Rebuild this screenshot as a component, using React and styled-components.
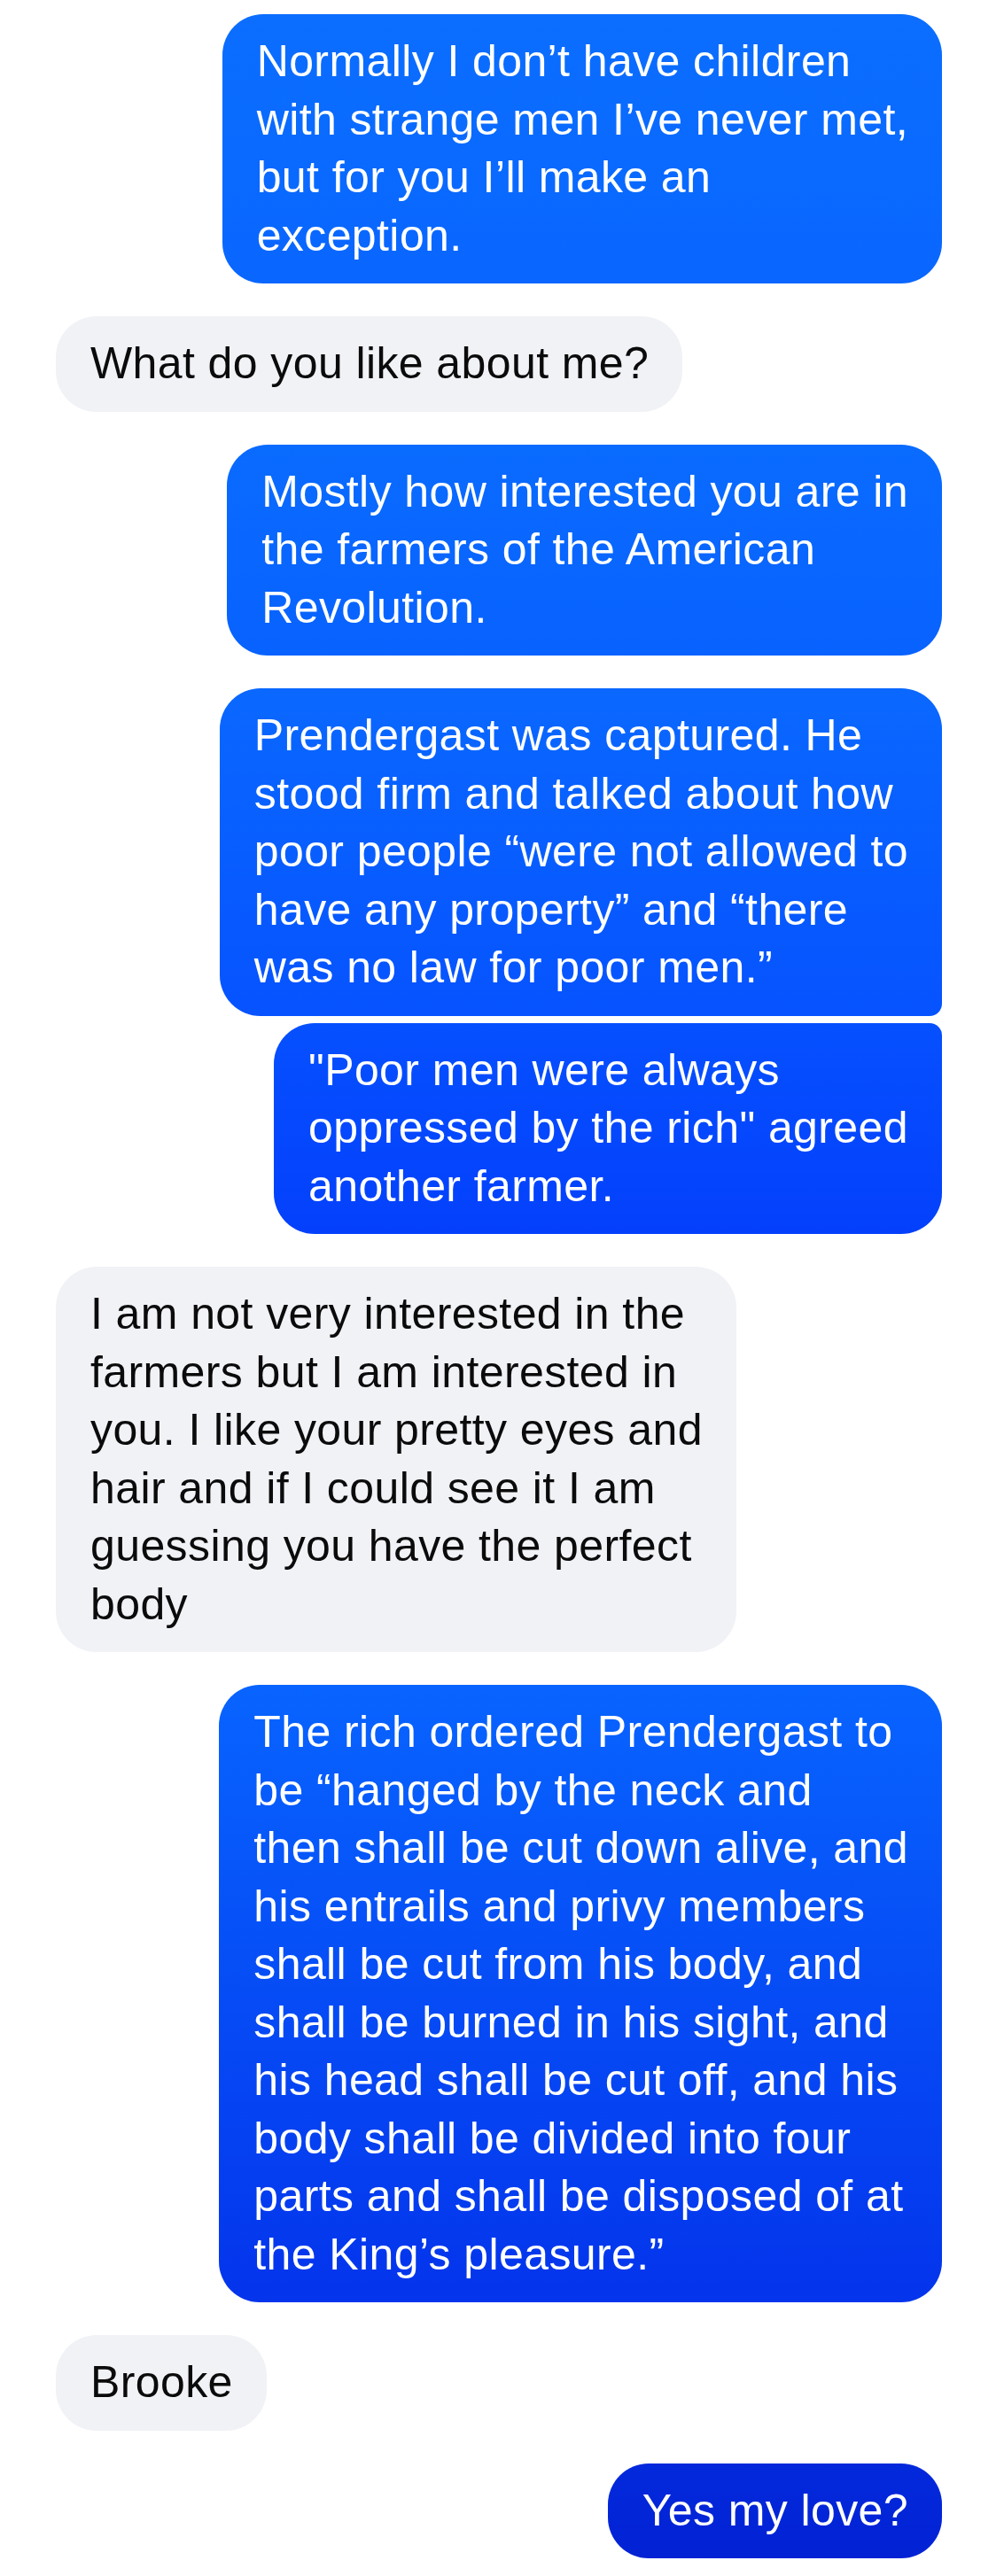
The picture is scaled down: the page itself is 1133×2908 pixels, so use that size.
import React from "react";
import styled, { createGlobalStyle, css } from "styled-components";

const Global = createGlobalStyle`
  html, body {
    margin: 0;
    padding: 0;
    background: #ffffff;
  }
  body {
    font-family: "Liberation Sans", Arial, sans-serif;
    -webkit-font-smoothing: antialiased;
  }
`;

const Thread = styled.main`
  display: flex;
  flex-direction: column;
  gap: 37px;
  padding: 16px 70px 15px 63px;
  width: 1133px;
  box-sizing: border-box;
`;

const Group = styled.section`
  display: flex;
  flex-direction: column;
  gap: 8px;
  align-items: ${(p) => (p.$side === "me" ? "flex-end" : "flex-start")};
`;

const BIG = 46;
const SMALL = 14;

const Bubble = styled.div`
  box-sizing: border-box;
  padding: 21px 38px 21px 39px;
  font-size: 50px;
  letter-spacing: 0.4px;
  line-height: 65.5px;
  white-space: nowrap;
  border-radius: ${BIG}px;
  ${(p) =>
    p.$side === "me"
      ? css`
          color: #ffffff;
          background: linear-gradient(180deg, ${p.$from} 0%, ${p.$to} 100%);
        `
      : css`
          color: #0b0b0c;
          background: #f1f2f6;
        `}
  ${(p) =>
    p.$pos === "first" &&
    css`
      border-bottom-right-radius: ${SMALL}px;
    `}
  ${(p) =>
    p.$pos === "last" &&
    css`
      border-top-right-radius: ${SMALL}px;
    `}
`;

const Line = styled.span`
  display: block;
`;

const groups = [
  {
    side: "me",
    msgs: [
      {
        from: "#0b6eff",
        to: "#0966ff",
        lines: [
          "Normally I don’t have children",
          "with strange men I’ve never met,",
          "but for you I’ll make an",
          "exception.",
        ],
      },
    ],
  },
  { side: "them", msgs: [{ lines: ["What do you like about me?"] }] },
  {
    side: "me",
    msgs: [
      {
        from: "#0a6bff",
        to: "#0862ff",
        lines: [
          "Mostly how interested you are in",
          "the farmers of the American",
          "Revolution.",
        ],
      },
    ],
  },
  {
    side: "me",
    msgs: [
      {
        from: "#0a68ff",
        to: "#0653ff",
        lines: [
          "Prendergast was captured. He",
          "stood firm and talked about how",
          "poor people “were not allowed to",
          "have any property” and “there",
          "was no law for poor men.”",
        ],
      },
      {
        from: "#0650ff",
        to: "#0440fc",
        lines: [
          "\"Poor men were always",
          "oppressed by the rich\" agreed",
          "another farmer.",
        ],
      },
    ],
  },
  {
    side: "them",
    msgs: [
      {
        lines: [
          "I am not very interested in the",
          "farmers but I am interested in",
          "you. I like your pretty eyes and",
          "hair and if I could see it I am",
          "guessing you have the perfect",
          "body",
        ],
      },
    ],
  },
  {
    side: "me",
    msgs: [
      {
        from: "#0864ff",
        to: "#0434ec",
        lines: [
          "The rich ordered Prendergast to",
          "be “hanged by the neck and",
          "then shall be cut down alive, and",
          "his entrails and privy members",
          "shall be cut from his body, and",
          "shall be burned in his sight, and",
          "his head shall be cut off, and his",
          "body shall be divided into four",
          "parts and shall be disposed of at",
          "the King’s pleasure.”",
        ],
      },
    ],
  },
  { side: "them", msgs: [{ lines: ["Brooke"] }] },
  {
    side: "me",
    msgs: [{ from: "#0329dc", to: "#0222d4", lines: ["Yes my love?"] }],
  },
];

function posOf(i, n) {
  if (n === 1) return "single";
  if (i === 0) return "first";
  if (i === n - 1) return "last";
  return "middle";
}

export default function App() {
  return (
    <>
      <Global />
      <Thread>
        {groups.map((g, gi) => (
          <Group key={gi} $side={g.side}>
            {g.msgs.map((m, mi) => (
              <Bubble
                key={mi}
                $side={g.side}
                $pos={posOf(mi, g.msgs.length)}
                $from={m.from}
                $to={m.to}
              >
                {m.lines.map((l, li) => (
                  <Line key={li}>{l}</Line>
                ))}
              </Bubble>
            ))}
          </Group>
        ))}
      </Thread>
    </>
  );
}
